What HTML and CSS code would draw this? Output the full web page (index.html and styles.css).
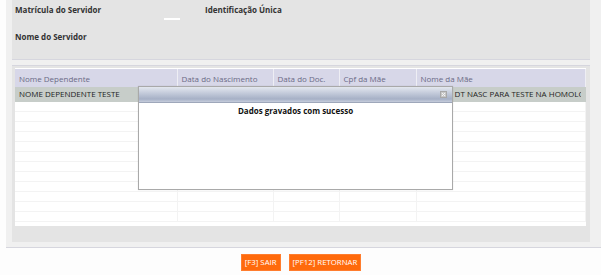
FILE: index.html
```html
<!DOCTYPE html>
<html lang="pt">
<head>
<meta charset="utf-8">
<title>Dependentes</title>
<link rel="stylesheet" href="styles.css">
</head>
<body>
<div class="outer">
  <div class="panel-top">
    <div class="row">
      <span class="lbl lbl-mat">Matrícula do Servidor</span>
      <span class="dash"></span>
      <span class="lbl">Identificação Única</span>
    </div>
    <div class="row row2">
      <span class="lbl">Nome do Servidor</span>
    </div>
  </div>
  <div class="panel-grid">
    <div class="grid-wrap">
      <table class="grid">
        <colgroup>
          <col class="c1"><col class="c2"><col class="c3"><col class="c4"><col class="c5">
        </colgroup>
        <thead>
          <tr><th>Nome Dependente</th><th>Data do Nascimento</th><th>Data do Doc.</th><th>Cpf da Mãe</th><th>Nome da Mãe</th></tr>
        </thead>
        <tbody>
          <tr class="sel"><td>NOME DEPENDENTE TESTE</td><td></td><td></td><td></td><td><div class="clip">MÃE TES DT NASC PARA TESTE NA HOMOLOGAÇÃO</div></td></tr>
          <tr class="e"><td></td><td></td><td></td><td></td><td></td></tr>
          <tr class="e"><td></td><td></td><td></td><td></td><td></td></tr>
          <tr class="e"><td></td><td></td><td></td><td></td><td></td></tr>
          <tr class="e"><td></td><td></td><td></td><td></td><td></td></tr>
          <tr class="e"><td></td><td></td><td></td><td></td><td></td></tr>
          <tr class="e"><td></td><td></td><td></td><td></td><td></td></tr>
          <tr class="e"><td></td><td></td><td></td><td></td><td></td></tr>
          <tr class="e"><td></td><td></td><td></td><td></td><td></td></tr>
          <tr class="e"><td></td><td></td><td></td><td></td><td></td></tr>
          <tr class="e"><td></td><td></td><td></td><td></td><td></td></tr>
          <tr class="e"><td></td><td></td><td></td><td></td><td></td></tr>
          <tr class="e"><td></td><td></td><td></td><td></td><td></td></tr>
        </tbody>
      </table>
    </div>
  </div>
</div>
<div class="buttons">
  <button class="btn">[F3] SAIR</button>
  <button class="btn">[PF12] RETORNAR</button>
</div>

<div class="dialog">
  <div class="dlg-title">
    <svg class="dlg-close" width="7" height="7" viewBox="0 0 7 7"><rect x="0.5" y="0.5" width="6" height="6" fill="#c8c8c8" stroke="#a8a8a8"/><path d="M2 2 L5 5 M5 2 L2 5" stroke="#f4f4f4" stroke-width="1"/></svg>
  </div>
  <div class="dlg-body">Dados gravados com sucesso</div>
</div>
</body>
</html>
```

FILE: styles.css
```css
* { box-sizing: border-box; }
html, body { margin: 0; padding: 0; }
body {
  background: #fdfdfd;
  font-family: "Open Sans", "Noto Sans", sans-serif;
  width: 601px;
  height: 275px;
  overflow: hidden;
  position: relative;
}
.outer {
  margin-left: 6px;
  background: #f0f0f0;
  padding: 0 11px 5px 6px;
  border-bottom: 1px solid #d6d6de;
}
.panel-top {
  height: 60px;
  background: #e4e4e4;
  border-bottom: 1px solid #d6d6de;
  padding: 2px 0 0 3px;
}
.row { display: flex; align-items: center; height: 15px; }
.row2 { margin-top: 12px; }
.lbl {
  font-size: 8px;
  font-weight: 700;
  color: #333;
}
.lbl-mat { width: 149px; }
.dash {
  width: 16px;
  height: 2px;
  background: #fff;
  margin-top: 19px;
  margin-right: 25px;
}
.panel-grid {
  margin-top: 5px;
  background: #e4e4e4;
  border-top: 1px solid #d6d6de;
  padding: 2px 4px 16px 3px;
}
.grid-wrap {
  background: #fff;
  height: 158px;
  padding: 1px 1px 0 0;
  overflow: hidden;
}
.grid {
  border-collapse: collapse;
  table-layout: fixed;
  width: 570px;
}
.c1 { width: 162px; }
.c2 { width: 96px; }
.c3 { width: 66px; }
.c4 { width: 77px; }
.c5 { width: 169px; }
.grid th {
  height: 18px;
  background: #d7d7e8;
  color: #6a6a86;
  font-size: 8px;
  font-weight: 400;
  text-align: left;
  padding: 0 4px;
  border-right: 1px solid #eeeef4;
  white-space: nowrap;
  overflow: hidden;
}
.grid td {
  padding: 0 4px;
  border-right: 1px solid #f3f3f3;
  border-bottom: 1px solid #f3f3f3;
  white-space: nowrap;
  overflow: hidden;
}
.grid tr.sel td {
  height: 14px;
  background: #c7cdc9;
  color: #1e1e1e;
  font-size: 8px;
  border-color: #c7cdc9;
}
.grid tr.e td { height: 10px; }
.clip { overflow: hidden; white-space: nowrap; }
.buttons {
  display: flex;
  justify-content: center;
  gap: 8px;
  margin-top: 6px;
  padding-left: 1px;
}
.btn {
  height: 17px;
  padding: 0 3px;
  background: #ff6a0c;
  border: 1px solid #ff7d2e;
  color: #fff;
  font-family: "Open Sans", "Noto Sans", sans-serif;
  font-size: 7.8px;
  line-height: 15px;
}
.dialog {
  position: absolute;
  left: 138px;
  top: 86px;
  width: 315px;
  height: 104px;
  background: #fff;
  border: 1px solid #a9a9a9;
  box-shadow: 0 0 1px rgba(0,0,0,0.15);
}
.dlg-title {
  height: 16px;
  background: linear-gradient(#e3e7ef, #c0c8d8 45%, #a6b0c6 80%, #c6cddc);
  border-bottom: 1px solid #9ea7ba;
  display: flex;
  justify-content: flex-end;
  align-items: center;
  padding-right: 5px;
}
.dlg-body {
  text-align: center;
  font-size: 8px;
  font-weight: 700;
  color: #111;
  padding-top: 2px;
}
```
